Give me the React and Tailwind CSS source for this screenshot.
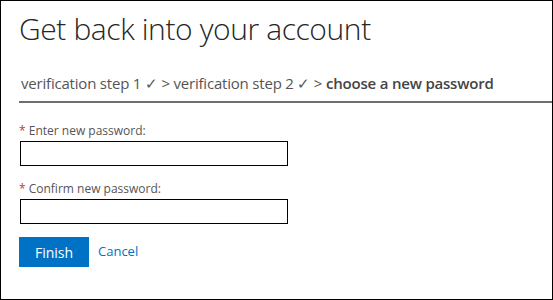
import React, { useState } from "react";

export default function App() {
  const [password, setPassword] = useState("");
  const [confirm, setConfirm] = useState("");

  return (
    <div className="w-[553px] h-[300px] border border-black bg-white font-['Open_Sans',sans-serif] overflow-hidden">
      <div className="pl-[18px]">
        <h1 className="mt-[8px] text-[30px] font-light leading-[40px] text-[#262626] tracking-[-0.4px]">
          Get back into your account
        </h1>

        <div className="mt-[24px] h-[30px] border-b-2 border-[#6e6e6e] pl-[2px] text-[15px] leading-[20px] text-[#555555] tracking-[-0.2px]">
          verification step 1 ✓ &gt; verification step 2 ✓ &gt;{" "}
          <span className="font-semibold text-[#444444]">choose a new password</span>
        </div>

        <form className="pt-[20px]" onSubmit={(e) => e.preventDefault()}>
          <label className="block text-[12px] leading-[16px] text-[#555555]">
            <span className="text-[#c0392b]">*</span> Enter new password:
          </label>
          <input
            type="password"
            value={password}
            onChange={(e) => setPassword(e.target.value)}
            className="mt-[2px] ml-px block w-[268px] h-[25px] border border-black bg-white outline-none px-1"
          />

          <label className="mt-[15px] block text-[12px] leading-[16px] text-[#555555]">
            <span className="text-[#c0392b]">*</span> Confirm new password:
          </label>
          <input
            type="password"
            value={confirm}
            onChange={(e) => setConfirm(e.target.value)}
            className="mt-[2px] ml-px block w-[268px] h-[25px] border border-black bg-white outline-none px-1"
          />

          <div className="mt-[13px] flex items-center">
            <button
              type="submit"
              className="w-[70px] h-[30px] bg-[#0072c6] text-white text-[14px]"
            >
              Finish
            </button>
            <a href="#" className="ml-[9px] text-[13px] text-[#0072c6]">
              Cancel
            </a>
          </div>
        </form>
      </div>
    </div>
  );
}
